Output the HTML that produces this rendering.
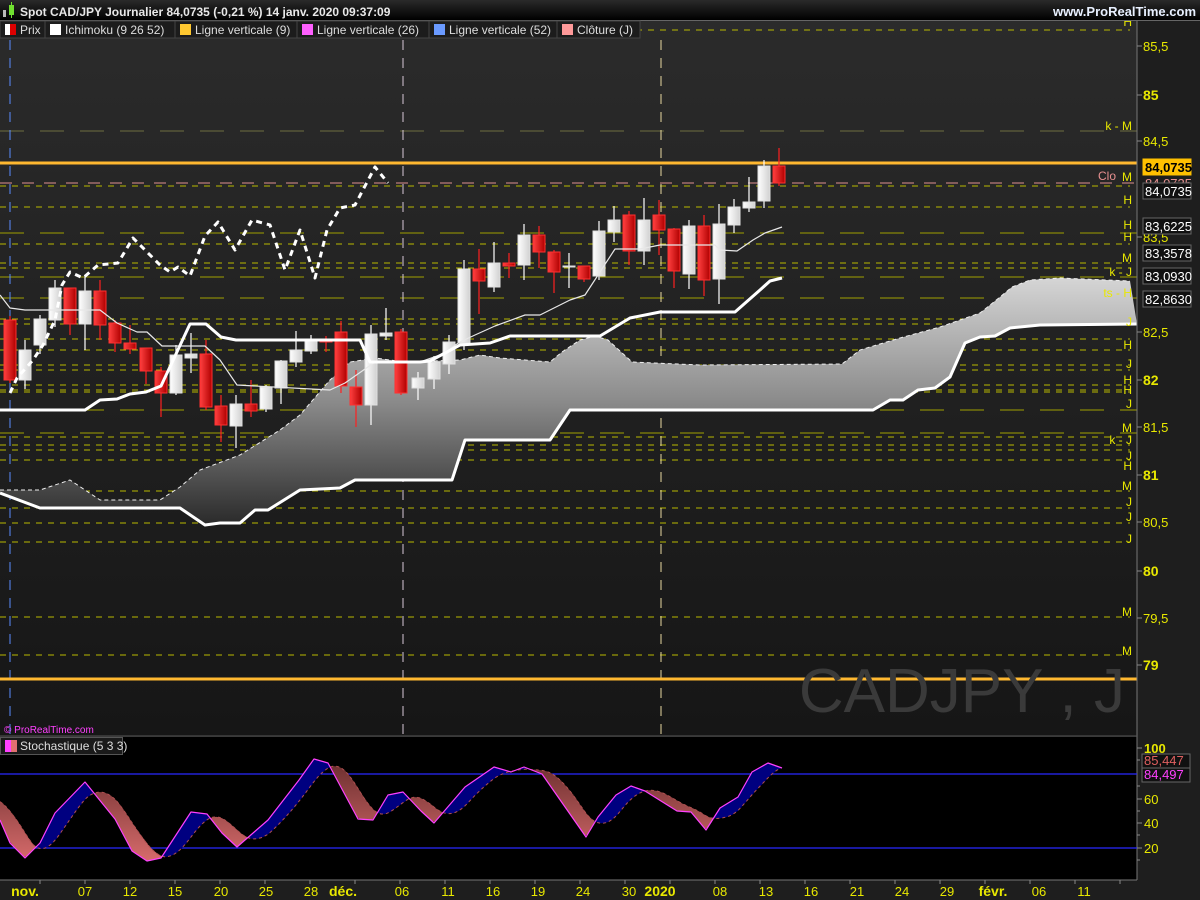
<!DOCTYPE html>
<html><head><meta charset="utf-8"><style>
html,body{margin:0;padding:0;background:#000;width:1200px;height:900px;overflow:hidden}
svg{display:block}
text{font-family:"Liberation Sans",sans-serif}
</style></head><body>
<svg id="s" width="1200" height="900" xmlns="http://www.w3.org/2000/svg">
<defs>
<linearGradient id="bg" x1="0" y1="0" x2="0" y2="1"><stop offset="0" stop-color="#2b2b2b"/><stop offset="1" stop-color="#161616"/></linearGradient>
<linearGradient id="cl" x1="0" y1="280" x2="0" y2="525" gradientUnits="userSpaceOnUse"><stop offset="0" stop-color="#d4d4d4"/><stop offset="0.5" stop-color="#8a8a8a"/><stop offset="1" stop-color="#2a2a2a"/></linearGradient>
<linearGradient id="wb" x1="0" y1="0" x2="1" y2="0"><stop offset="0" stop-color="#ffffff"/><stop offset="1" stop-color="#d0d0d0"/></linearGradient>
<linearGradient id="rb" x1="0" y1="0" x2="1" y2="0"><stop offset="0" stop-color="#ff4040"/><stop offset="1" stop-color="#b00000"/></linearGradient>
<linearGradient id="sf" x1="0" y1="760" x2="0" y2="870" gradientUnits="userSpaceOnUse"><stop offset="0" stop-color="#6a2e2e"/><stop offset="1" stop-color="#e07070"/></linearGradient>
<linearGradient id="hd" x1="0" y1="0" x2="0" y2="1"><stop offset="0" stop-color="#2a2a2a"/><stop offset="1" stop-color="#000"/></linearGradient>
</defs>
<rect width="1200" height="900" fill="#1e1e1e"/>
<rect x="0" y="21" width="1137" height="715" fill="url(#bg)"/>
<rect x="0" y="737" width="1137" height="143" fill="#000"/>
<g id="g"></g>
</svg>
<script>
var g=document.getElementById('g'),h='';
function L(x1,y1,x2,y2,c,w,d){h+='<line x1="'+x1+'" y1="'+y1+'" x2="'+x2+'" y2="'+y2+'" stroke="'+c+'" stroke-width="'+w+'"'+(d?' stroke-dasharray="'+d+'"':'')+'/>';}
function P(pts,c,w,d,f){h+='<polyline points="'+pts.map(p=>p.join(',')).join(' ')+'" fill="'+(f||'none')+'" stroke="'+c+'" stroke-width="'+w+'"'+(d?' stroke-dasharray="'+d+'"':'')+' stroke-linejoin="round"/>';}
function T(x,y,s,c,sz,b,a){h+='<text x="'+x+'" y="'+y+'" fill="'+c+'" font-size="'+sz+'"'+(b?' font-weight="bold"':'')+(a?' text-anchor="'+a+'"':'')+'>'+s+'</text>';}
var sh=[30,186,207,244,263,268,319,324,339,350,365,370,385,390,392,437,445,450,460,491,508,523,542,617,655];
sh.forEach(y=>L(0,y,1130,y,'#b8b800',1,'6,6'));
[131].forEach(y=>L(0,y,1137,y,'#6e6e40',1,'24,16'));
[233,277,298,410,433].forEach(y=>L(0,y,1137,y,'#a0a000',1,'24,16'));
L(0,183,1137,183,'#e09090',1,'12,10');
L(10,40,10,735,'#5a8cff',1,'10,8');
L(403,40,403,735,'#d8c8d8',1,'10,8');
L(661,40,661,735,'#e8d8a0',1,'10,8');
var up=[[0,490],[40,490],[70,480],[100,500],[160,500],[180,487],[200,470],[240,455],[280,430],[300,415],[330,380],[350,362],[375,358],[405,362],[460,360],[480,355],[500,358],[550,362],[562,352],[580,340],[595,336],[608,340],[632,362],[700,365],[842,364],[860,350],[900,338],[940,327],[980,313],[1000,297],[1012,287],[1030,280],[1060,278],[1130,281]];
var lo=[[0,493],[40,508],[180,508],[205,525],[220,523],[240,523],[255,510],[268,510],[300,490],[340,488],[355,480],[452,480],[465,440],[550,440],[570,410],[873,410],[890,400],[903,400],[918,390],[935,388],[950,377],[965,343],[980,337],[995,336],[1010,328],[1040,325],[1137,324]];
h+='<polygon points="'+up.concat(lo.slice().reverse()).map(p=>p.join(',')).join(' ')+'" fill="url(#cl)"/>';
P(up,'#eeeeee',1,'4,3');
P(lo,'#ffffff',3);
L(0,163,1137,163,'#ffb830',3);L(0,679,1137,679,'#ffb830',3);
var c=[[10,'r',320,380,316,383],[25,'w',350,380,340,389],[40,'w',319,345,315,354],[55,'w',288,320,280,327],[70,'r',288,324,288,335],[85,'w',291,324,275,350],[100,'r',291,325,280,340],[115,'r',323,343,320,352],[130,'r',343,349,325,354],[146,'r',348,371,348,384],[161,'r',371,393,367,417],[176,'w',355,393,345,395],[191,'w',354,358,333,373],[206,'r',354,407,340,410],[221,'r',406,425,395,442],[236,'w',404,426,395,448],[251,'r',404,411,380,417],[266,'w',387,409,385,412],[281,'w',361,388,360,404],[296,'w',350,362,331,367],[311,'w',339,351,335,354],[326,'r',339,342,336,352],[341,'r',332,386,321,393],[356,'r',387,405,370,427],[371,'w',334,405,325,425],[386,'w',333,336,308,340],[401,'r',332,393,329,395],[418,'w',378,388,372,400],[434,'w',362,379,356,389],[449,'w',342,364,335,374],[464,'w',269,343,260,350],[479,'r',269,281,249,314],[494,'w',263,287,242,292],[509,'r',263,266,253,278],[524,'w',235,265,224,280],[539,'r',235,252,226,268],[554,'r',252,272,250,293],[569,'w',266,267,253,288],[584,'r',266,279,266,282],[599,'w',231,276,221,280],[614,'w',220,232,206,242],[629,'r',215,251,211,265],[644,'w',220,251,198,265],[659,'r',215,230,200,255],[674,'r',229,271,228,288],[689,'w',226,274,220,289],[704,'r',226,280,215,296],[719,'w',224,279,204,304],[734,'w',207,225,199,233],[749,'w',202,208,177,212],[764,'w',166,201,160,208],[779,'r',166,183,148,186]];
c.forEach(k=>{var col=k[1]=='r'?'#ff2020':'#ffffff';L(k[0],k[4],k[0],k[5],col,1.2);
h+='<rect x="'+(k[0]-6)+'" y="'+k[2]+'" width="12" height="'+Math.max(1,k[3]-k[2])+'" fill="url(#'+(k[1]=='r'?'rb':'wb')+')" stroke="'+(k[1]=='r'?'#ff3030':'#e0e0e0')+'" stroke-width="1"/>';});
P([[0,295],[10,308],[25,310],[100,310],[117,323],[137,332],[147,332],[162,346],[205,346],[220,360],[237,385],[330,390],[345,383],[375,362],[420,362],[440,355],[460,342],[475,335],[495,326],[525,315],[540,315],[570,300],[585,295],[615,249],[640,249],[660,245],[715,245],[720,250],[737,251],[753,240],[765,233],[782,227]],'#e8e8e8',1.2);
P([[0,410],[85,410],[100,400],[117,399],[130,394],[146,392],[161,386],[176,354],[190,324],[206,324],[221,337],[236,340],[360,340],[370,362],[420,362],[430,361],[460,345],[490,343],[510,336],[600,336],[630,318],[660,312],[735,312],[760,290],[770,281],[782,278]],'#ffffff',3);
P([[10,393],[17,378],[33,360],[43,345],[55,320],[62,285],[70,272],[83,278],[98,265],[118,263],[133,238],[160,265],[170,272],[178,267],[190,276],[205,236],[218,222],[235,250],[252,220],[270,225],[285,270],[300,230],[315,278],[327,230],[340,208],[355,205],[375,167],[388,183]],'#ffffff',3,'6,5');
T(1125,712,'CADJPY , J','#3a3a3a',62,false,'end');
var lb=[[22,'H'],[126,'k - M'],[200,'H'],[225,'H'],[237,'H'],[258,'M'],[272,'k - J'],[293,'ts - H'],[322,'J'],[345,'H'],[364,'J'],[380,'H'],[390,'H'],[404,'J'],[428,'M'],[440,'k - J'],[456,'J'],[466,'H'],[486,'M'],[502,'J'],[517,'J'],[539,'J'],[612,'M'],[651,'M']];
lb.forEach(l=>T(1132,l[0]+4,l[1],'#e8e800',12,false,'end'));
T(1098,180,'Clo','#e89090',12);T(1132,181,'M','#e8e800',12,false,'end');
L(1137,21,1137,880,'#777',1);
var ax=[[85.5,46],[85,95,1],[84.5,141],[83.5,237],[82.5,332],[82,380,1],[81.5,427],[81,475,1],[80.5,522],[80,571,1],[79.5,618],[79,665,1]];
ax.forEach(a=>{L(1137,a[1],1142,a[1],'#888',1);T(1143,a[1]+5,String(a[0]).replace('.',','),'#e8e800',a[2]?14:13,!!a[2]);});
function box(y,t,bg,fg,bc,b){h+='<rect x="1143" y="'+(y-8)+'" width="48" height="16" fill="'+bg+'" stroke="'+bc+'"/>';T(1145,y+5,t,fg,13,b);}
box(167,'84,0735','#ffc000','#000','#ffc000',1);
T(1145,188,'84,0735','#e89090',13);
box(191,'84,0735','#111','#fff','#666');
box(226,'83,6225','#111','#fff','#666');
box(253,'83,3578','#111','#fff','#666');
box(276,'83,0930','#111','#fff','#666');
box(299,'82,8630','#111','#fff','#666');
L(0,736,1137,736,'#555',1);
T(4,733,'© ProRealTime.com','#ff40ff',10);
L(0,774,1137,774,'#2828ff',1.2);L(0,848,1137,848,'#2828ff',1.2);
var K=[[0,820],[10,843],[25,858],[40,843],[55,813],[85,782],[115,819],[132,851],[147,861],[161,858],[191,812],[207,814],[222,833],[237,847],[268,820],[299,780],[314,759],[328,763],[358,819],[373,820],[388,795],[403,792],[421,811],[434,823],[465,787],[494,767],[511,772],[524,767],[542,774],[586,837],[598,817],[616,795],[631,786],[645,791],[677,811],[691,812],[706,830],[720,808],[738,797],[752,772],[768,763],[782,768]];
function ky(x){if(x<0)return 800;for(var i=0;i<K.length-1;i++){if(x<=K[i+1][0]){var t=(x-K[i][0])/(K[i+1][0]-K[i][0]);return K[i][1]+t*(K[i+1][1]-K[i][1]);}}return K[K.length-1][1];}
var xs=[],kk=[],dd=[];for(var x=0;x<=782;x+=3){xs.push(x);kk.push(ky(x));}
for(var i=0;i<xs.length;i++){var s=0,n=0;for(var j=0;j<=33;j+=3){s+=ky(xs[i]-j);n++;}dd.push(s/n);}
for(var i=0;i<xs.length-1;i++){var up2=(kk[i]+kk[i+1])<(dd[i]+dd[i+1]);h+='<polygon points="'+xs[i]+','+kk[i]+' '+(xs[i+1]+0.6)+','+kk[i+1]+' '+(xs[i+1]+0.6)+','+dd[i+1]+' '+xs[i]+','+dd[i]+'" fill="'+(up2?'#000080':'url(#sf)')+'"/>';}
P(xs.map((x,i)=>[x,dd[i]]),'#b05050',1,'3,3');
P(K,'#ff40ff',1.2);
h+='<rect x="0.5" y="737.5" width="122" height="17" fill="#1a1a1a" stroke="#555"/><rect x="5" y="740" width="6" height="12" fill="#ff40ff"/><rect x="11" y="740" width="6" height="12" fill="#e07070"/>';
T(20,750,'Stochastique (5 3 3)','#ddd',12);
[[100,748,1],[60,799],[40,823],[20,848]].forEach(a=>{L(1137,a[1],1142,a[1],'#888',1);T(1144,a[1]+5,a[0],'#e8e800',13,!!a[2]);});
[760,786,811,835,860].forEach(y=>L(1137,y,1140,y,'#888',1));
h+='<rect x="1142" y="754" width="48" height="14" fill="#111" stroke="#666"/><rect x="1142" y="768" width="48" height="14" fill="#111" stroke="#666"/>';
T(1144,765,'85,447','#e06060',13);T(1144,779,'84,497','#ff40ff',13);
L(0,880,1137,880,'#777',1);
var dl=[[25,'nov.',1],[85,'07'],[130,'12'],[175,'15'],[221,'20'],[266,'25'],[311,'28'],[343,'déc.',1],[402,'06'],[448,'11'],[493,'16'],[538,'19'],[583,'24'],[629,'30'],[660,'2020',1],[720,'08'],[766,'13'],[811,'16'],[857,'21'],[902,'24'],[947,'29'],[993,'févr.',1],[1039,'06'],[1084,'11']];
dl.forEach(d=>T(d[0],896,d[1],'#e8e800',d[2]?14:13,!!d[2],'middle'));
for(var x=40;x<1137;x+=45)L(x,880,x,884,'#888',1);
h+='<rect x="0" y="0" width="1200" height="20" fill="url(#hd)"/><line x1="0" y1="20.5" x2="1200" y2="20.5" stroke="#666"/>';
h+='<rect x="3" y="10" width="3" height="7" fill="#bbb"/><rect x="9" y="5" width="5" height="10" fill="#70e030"/><line x1="11.5" y1="2" x2="11.5" y2="18" stroke="#70e030"/>';
T(20,16,'Spot CAD/JPY Journalier 84,0735 (-0,21 %) 14 janv. 2020 09:37:09','#e8e8e8',12,1);
T(1196,16,'www.ProRealTime.com','#e8f0ff',13,1,'end');
h+='<rect x="0" y="21" width="640" height="17" fill="#1c1c1c" stroke="#444"/>';
var lg=[[0,45,'Prix'],[45,175,'Ichimoku (9 26 52)','#fff'],[175,297,'Ligne verticale (9)','#ffc830'],[297,429,'Ligne verticale (26)','#ff60ff'],[429,557,'Ligne verticale (52)','#6a9aff'],[557,640,'Clôture (J)','#ff9a9a']];
lg.forEach(l=>{L(l[1],21,l[1],38,'#444',1);if(l[3])h+='<rect x="'+(l[0]+5)+'" y="24" width="11" height="11" fill="'+l[3]+'"/>';T(l[0]+20,34,l[2],'#ddd',12);});
h+='<rect x="5" y="24" width="5" height="11" fill="#fff"/><rect x="10" y="24" width="6" height="11" fill="#d00"/>';
g.innerHTML=h;
</script>
</body></html>
